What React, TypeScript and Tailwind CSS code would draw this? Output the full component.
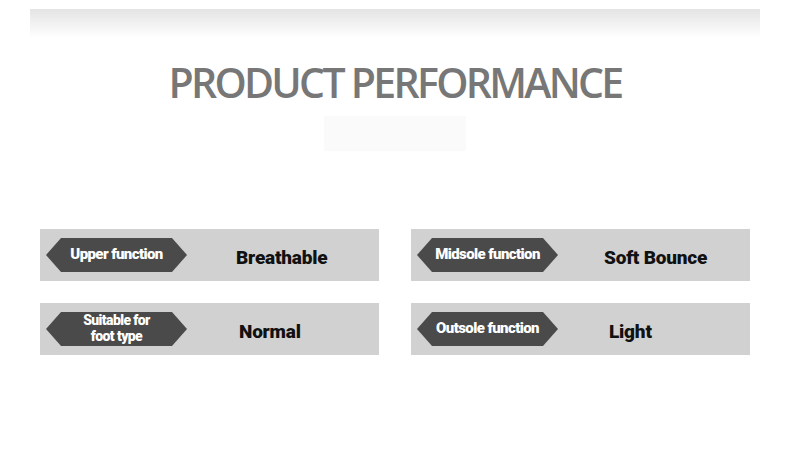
import React from "react";

type Item = { label: React.ReactNode; value: string; offset: string; small?: boolean };

const rows: Item[][] = [
  [
    { label: "Upper function", value: "Breathable", offset: "ml-[49px]" },
    { label: "Midsole function", value: "Soft Bounce", offset: "ml-[46px]" },
  ],
  [
    {
      label: (
        <>
          Suitable for
          <br />
          foot type
        </>
      ),
      value: "Normal",
      offset: "ml-[52px]",
      small: true,
    },
    { label: "Outsole function", value: "Light", offset: "ml-[51px]" },
  ],
];

function Panel({ item }: { item: Item }) {
  return (
    <div className="flex h-[52px] items-center bg-[#d1d1d1] pl-[6px]">
      <div className="flex h-[34px] w-[141px] shrink-0 items-center justify-center bg-[#4a4a4a] pb-[2px] text-center text-white [clip-path:polygon(15px_0,calc(100%-15px)_0,100%_50%,calc(100%-15px)_100%,15px_100%,0_50%)]">
        <span
          className={
            item.small
              ? "text-[14px] font-black leading-[16px] tracking-[-0.6px]"
              : "text-[15px] font-black leading-none tracking-[-0.6px]"
          }
        >
          {item.label}
        </span>
      </div>
      <div className={`${item.offset} pt-[6px] text-[19px] font-black tracking-[-0.2px] text-[#111]`}>{item.value}</div>
    </div>
  );
}

export default function App() {
  return (
    <div className="h-[452px] w-[790px] overflow-hidden bg-white font-['Roboto',sans-serif]">
      {/* top fade */}
      <div className="mx-[30px] mt-[9px] h-[29px] bg-gradient-to-b from-[#e4e4e4] to-white" />

      <h1 className="mt-[22px] text-center font-['Open_Sans',sans-serif] text-[41px] font-semibold leading-[44px] tracking-[-2.7px] text-[#777]">
        PRODUCT PERFORMANCE
      </h1>

      <div className="mx-auto mt-[12px] h-[35px] w-[142px] bg-[#fafafa]" />

      <div className="mx-[40px] mt-[78px] grid grid-cols-2 gap-x-[32px] gap-y-[22px]">
        {rows.flat().map((item, i) => (
          <Panel key={i} item={item} />
        ))}
      </div>
    </div>
  );
}
